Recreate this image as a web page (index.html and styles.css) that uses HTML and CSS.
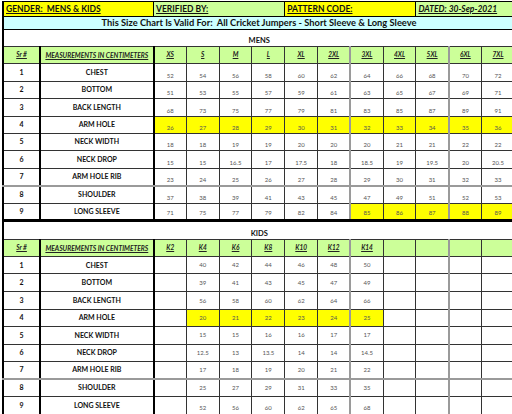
FILE: index.html
```html
<!DOCTYPE html>
<html>
<head>
<meta charset="utf-8">
<link rel="stylesheet" href="styles.css">
</head>
<body>
<table class="sheet">
  <colgroup>
    <col class="c-sr"><col class="c-name">
    <col class="c-sz"><col class="c-sz"><col class="c-sz"><col class="c-sz"><col class="c-sz"><col class="c-sz"><col class="c-sz"><col class="c-sz"><col class="c-sz"><col class="c-sz"><col class="c-sz">
  </colgroup>
  <tr class="top">
    <td colspan="2" class="yellow edge sep"><u>GENDER:&nbsp; MENS &amp; KIDS</u></td>
    <td colspan="4" class="green"><u>VERIFIED BY:</u></td>
    <td colspan="4" class="yellow"><u>PATTERN CODE:</u></td>
    <td colspan="3" class="green"><u><i>DATED: 30-Sep-2021</i></u></td>
  </tr>
  <tr class="valid">
    <td colspan="13" class="blue edge">This Size Chart Is Valid For:&nbsp; All Cricket Jumpers - Short Sleeve &amp; Long Sleeve</td>
  </tr>
  <tr class="section">
    <td colspan="13" class="edge">MENS</td>
  </tr>
  <tr class="head">
    <td class="edge sep"><u>Sr #</u></td>
    <td class="sep"><u>MEASUREMENTS IN CENTIMETERS</u></td>
    <td><u>XS</u></td><td><u>S</u></td><td><u>M</u></td><td><u>L</u></td><td><u>XL</u></td><td><u>2XL</u></td><td class="g"><u>3XL</u></td><td><u>4XL</u></td><td><u>5XL</u></td><td class="g"><u>6XL</u></td><td><u>7XL</u></td>
  </tr>
  <tr class="mrow tall"><td class="edge sep">1</td><td class="sep">CHEST</td><td>52</td><td>54</td><td>56</td><td>58</td><td>60</td><td>62</td><td class="g">64</td><td>66</td><td>68</td><td class="g">70</td><td>72</td></tr>
  <tr class="mrow"><td class="edge sep">2</td><td class="sep">BOTTOM</td><td>51</td><td>53</td><td>55</td><td>57</td><td>59</td><td>61</td><td class="g">63</td><td>65</td><td>67</td><td class="g">69</td><td>71</td></tr>
  <tr class="mrow tall"><td class="edge sep">3</td><td class="sep">BACK LENGTH</td><td>68</td><td>73</td><td>75</td><td>77</td><td>79</td><td>81</td><td class="g">83</td><td>85</td><td>87</td><td class="g">89</td><td>91</td></tr>
  <tr class="mrow"><td class="edge sep">4</td><td class="sep">ARM HOLE</td><td class="hl">26</td><td class="hl">27</td><td class="hl">28</td><td class="hl">29</td><td class="hl">30</td><td class="hl">31</td><td class="hl g">32</td><td class="hl">33</td><td class="hl">34</td><td class="hl g">35</td><td class="hl">36</td></tr>
  <tr class="mrow"><td class="edge sep">5</td><td class="sep">NECK WIDTH</td><td>18</td><td>18</td><td>19</td><td>19</td><td>20</td><td>20</td><td class="g">20</td><td>21</td><td>21</td><td class="g">22</td><td>22</td></tr>
  <tr class="mrow tall"><td class="edge sep">6</td><td class="sep">NECK DROP</td><td>15</td><td>15</td><td>16.5</td><td>17</td><td>17.5</td><td>18</td><td class="g">18.5</td><td>19</td><td>19.5</td><td class="g">20</td><td>20.5</td></tr>
  <tr class="mrow gb"><td class="edge sep">7</td><td class="sep">ARM HOLE RIB</td><td>23</td><td>24</td><td>25</td><td>26</td><td>27</td><td>28</td><td class="g">29</td><td>30</td><td>31</td><td class="g">32</td><td>33</td></tr>
  <tr class="mrow tall"><td class="edge sep">8</td><td class="sep">SHOULDER</td><td>37</td><td>38</td><td>39</td><td>41</td><td>43</td><td>45</td><td class="g">47</td><td>49</td><td>51</td><td class="g">52</td><td>53</td></tr>
  <tr class="mrow last"><td class="edge sep">9</td><td class="sep">LONG SLEEVE</td><td>71</td><td>75</td><td>77</td><td>79</td><td>82</td><td>84</td><td class="hl g">85</td><td class="hl">86</td><td class="hl">87</td><td class="hl g">88</td><td class="hl">89</td></tr>
  <tr class="section kids">
    <td colspan="13" class="edge">KIDS</td>
  </tr>
  <tr class="head">
    <td class="edge sep"><u>Sr #</u></td>
    <td class="sep"><u>MEASUREMENTS IN CENTIMETERS</u></td>
    <td><u>K2</u></td><td><u>K4</u></td><td><u>K6</u></td><td><u>K8</u></td><td><u>K10</u></td><td><u>K12</u></td><td class="g"><u>K14</u></td><td></td><td></td><td class="g"></td><td></td>
  </tr>
  <tr class="krow"><td class="edge sep">1</td><td class="sep">CHEST</td><td></td><td>40</td><td>42</td><td>44</td><td>46</td><td>48</td><td class="g">50</td><td></td><td></td><td class="g"></td><td></td></tr>
  <tr class="krow k2"><td class="edge sep">2</td><td class="sep">BOTTOM</td><td></td><td>39</td><td>41</td><td>43</td><td>45</td><td>47</td><td class="g">49</td><td></td><td></td><td class="g"></td><td></td></tr>
  <tr class="krow"><td class="edge sep">3</td><td class="sep">BACK LENGTH</td><td></td><td>56</td><td>58</td><td>60</td><td>62</td><td>64</td><td class="g">66</td><td></td><td></td><td class="g"></td><td></td></tr>
  <tr class="krow"><td class="edge sep">4</td><td class="sep">ARM HOLE</td><td></td><td class="hl">20</td><td class="hl">21</td><td class="hl">22</td><td class="hl">23</td><td class="hl">24</td><td class="hl g">25</td><td></td><td></td><td class="g"></td><td></td></tr>
  <tr class="krow"><td class="edge sep">5</td><td class="sep">NECK WIDTH</td><td></td><td>15</td><td>15</td><td>16</td><td>16</td><td>17</td><td class="g">17</td><td></td><td></td><td class="g"></td><td></td></tr>
  <tr class="krow"><td class="edge sep">6</td><td class="sep">NECK DROP</td><td></td><td>12.5</td><td>13</td><td>13.5</td><td>14</td><td>14</td><td class="g">14.5</td><td></td><td></td><td class="g"></td><td></td></tr>
  <tr class="krow gb"><td class="edge sep">7</td><td class="sep">ARM HOLE RIB</td><td></td><td>17</td><td>18</td><td>19</td><td>20</td><td>21</td><td class="g">22</td><td></td><td></td><td class="g"></td><td></td></tr>
  <tr class="krow"><td class="edge sep">8</td><td class="sep">SHOULDER</td><td></td><td>25</td><td>27</td><td>29</td><td>31</td><td>33</td><td class="g">35</td><td></td><td></td><td class="g"></td><td></td></tr>
  <tr class="krow klast"><td class="edge sep">9</td><td class="sep">LONG SLEEVE</td><td></td><td>52</td><td>56</td><td>60</td><td>62</td><td>65</td><td class="g">68</td><td></td><td></td><td class="g"></td><td></td></tr>
</table>
</body>
</html>
```

FILE: styles.css
```css
html, body {
  margin: 0;
  padding: 0;
  overflow: hidden;
  background: #ffffff;
}

body {
  font-family: Lato, "Open Sans", "Liberation Sans", sans-serif;
  color: #111;
}

.sheet {
  border-collapse: collapse;
  table-layout: fixed;
  width: 513px;
  margin: 1px 0 0 2px;
}

.c-sr { width: 37px; }
.c-name { width: 113px; }
.c-sz { width: 32.7px; }

.sheet td {
  padding: 0;
  border: 1px solid #333;
  text-align: center;
  white-space: nowrap;
  overflow: hidden;
  line-height: 1;
}

.sheet td.edge { border-left: 2px solid #000; }
.sheet td.sep { border-right: 2px solid #000; }
.sheet td.g { border-left: 2px solid #9a9a9a; }

.yellow { background: #ffff00; }
.green { background: #ccff99; }
.blue { background: #ccffff; }
.hl { background: #ffff00; }

/* top info row */
.top { height: 15px; }
.top td {
  font-size: 8.5px;
  font-weight: 700;
  text-align: left;
  padding-left: 2px;
  border-color: #000;
}
.top td.sep { border-right-width: 1px; }

.valid { height: 13px; }
.valid td {
  font-size: 9.3px;
  font-weight: 700;
  border-color: #000;
}

.section { height: 17px; }
.section td {
  font-size: 7.5px;
  font-weight: 700;
  vertical-align: bottom;
  padding-bottom: 2px;
  border-right: none;
}

.section.kids { height: 19px; }
.section.kids td {
  border-top: 3px solid #000;
}

.head { height: 17px; }
.head td {
  background: #ccff99;
  font-size: 6.5px;
  font-weight: 700;
  font-style: italic;
  color: #222;
}
.head td.sep { font-size: 6.7px; }
.head td.edge { font-size: 6.5px; }

.mrow td,
.krow td {
  font-size: 6px;
  color: #555;
}

.mrow td.edge,
.mrow td.sep,
.krow td.edge,
.krow td.sep {
  font-size: 7px;
  font-weight: 700;
  color: #111;
}

.mrow { height: 17px; }
.mrow.tall { height: 18px; }
.mrow td {
  vertical-align: bottom;
  padding-bottom: 2px;
}
.mrow td.edge,
.mrow td.sep {
  vertical-align: middle;
  padding-bottom: 1px;
}

.mrow.last td {
  vertical-align: middle;
  padding-bottom: 0;
  padding-top: 2px;
}
.mrow.last td.edge,
.mrow.last td.sep { padding-top: 0; }

.gb td { border-bottom: 2px solid #9a9a9a; }

.krow { height: 17.4px; }
.krow.k2 { height: 18px; }
.krow td { vertical-align: middle; }
.krow.klast { height: 19px; }
.krow.klast td { padding-top: 4px; }
.krow.klast td.edge,
.krow.klast td.sep { padding-top: 0; }
```
